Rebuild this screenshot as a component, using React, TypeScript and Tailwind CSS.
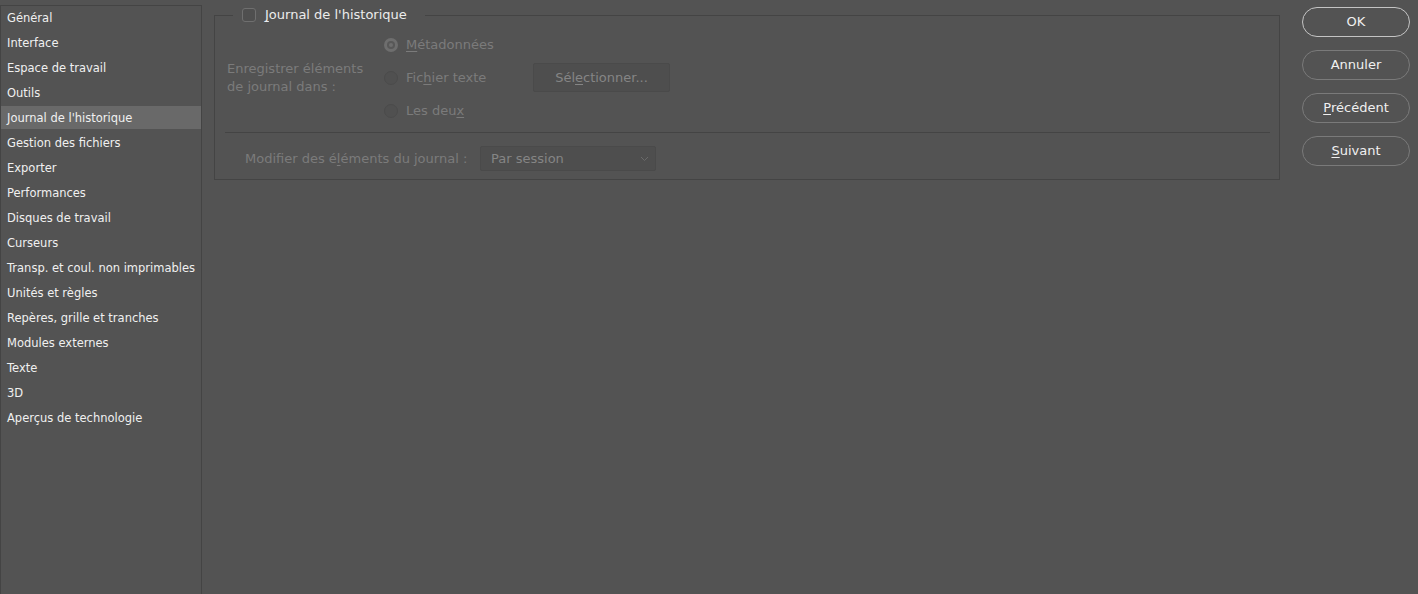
const sections = [
  'Général',
  'Interface',
  'Espace de travail',
  'Outils',
  "Journal de l'historique",
  'Gestion des fichiers',
  'Exporter',
  'Performances',
  'Disques de travail',
  'Curseurs',
  'Transp. et coul. non imprimables',
  'Unités et règles',
  'Repères, grille et tranches',
  'Modules externes',
  'Texte',
  '3D',
  'Aperçus de technologie',
]

function Radio({ checked }: { checked?: boolean }) {
  if (checked) {
    return (
      <span className="flex h-[14px] w-[14px] items-center justify-center rounded-full bg-[#6e6e6e]">
        <span className="flex h-[8px] w-[8px] items-center justify-center rounded-full bg-[#585858]">
          <span className="h-[4px] w-[4px] rounded-full bg-[#6e6e6e]" />
        </span>
      </span>
    )
  }
  return <span className="h-[14px] w-[14px] rounded-full border border-[#4b4b4b] bg-[#505050]" />
}

function PillButton({ children, primary }: { children: React.ReactNode; primary?: boolean }) {
  return (
    <button
      className={`flex h-[30px] w-[108px] items-center justify-center rounded-full text-[13px] text-[#f0f0f0] ${
        primary ? 'border-[1.5px] border-[#c4c4c4]' : 'border border-[#7a7a7a]'
      }`}
    >
      {children}
    </button>
  )
}

export default function App() {
  return (
    <div
      className="flex h-[594px] w-[1418px] overflow-hidden bg-[#535353] text-[#f0f0f0]"
      style={{ fontFamily: '"DejaVu Sans", Verdana, sans-serif' }}
    >
      {/* Category list */}
      <div className="mt-[5px] w-[202px] shrink-0 border-x border-t border-[#444444]">
        {sections.map((s) => (
          <div
            key={s}
            className={`mb-[2px] flex h-[23px] items-center pl-[6px] pt-[2px] text-[11.5px] ${
              s === "Journal de l'historique" ? 'bg-[#696969]' : ''
            }`}
          >
            {s}
          </div>
        ))}
      </div>

      {/* Panel */}
      <div className="ml-[12px] w-[1066px] shrink-0">
        <fieldset className="mt-[5px] h-[175px] border border-[#444444]">
          <legend className="ml-[18px] flex h-[20px] items-center pl-[9px] pr-[18px]">
            <span className="h-[14px] w-[14px] rounded-[3px] border border-[#6f6f6f] bg-[#4f4f4f]" />
            <span className="ml-[9px] text-[13px] text-[#ececec]">
              <span className="underline underline-offset-2">J</span>ournal de l'historique
            </span>
          </legend>

          <div className="flex pt-[3px] text-[13px] text-[#7b7b7b]">
            <div className="flex w-[169px] items-center pl-[12px] leading-[18px]">
              Enregistrer éléments
              <br />
              de journal dans :
            </div>
            <div className="flex flex-col">
              <div className="flex h-[33px] items-center gap-[8px]">
                <Radio checked />
                <span>
                  <span className="underline underline-offset-2">M</span>étadonnées
                </span>
              </div>
              <div className="flex h-[33px] items-center">
                <div className="flex w-[149px] items-center gap-[8px]">
                  <Radio />
                  <span>
                    Fic<span className="underline underline-offset-2">h</span>ier texte
                  </span>
                </div>
                <button className="flex h-[29px] w-[137px] items-center justify-center rounded-[2px] border border-[#4a4a4a] bg-[#4e4e4e] text-[13px] text-[#858585]">
                  Sél<span className="underline underline-offset-2">e</span>ctionner...
                </button>
              </div>
              <div className="flex h-[33px] items-center gap-[8px]">
                <Radio />
                <span>
                  Les deu<span className="underline underline-offset-2">x</span>
                </span>
              </div>
            </div>
          </div>

          <div className="ml-[10px] mr-[9px] mt-[5px] h-px bg-[#444444]" />

          <div className="mt-[13px] flex items-center pl-[30px] text-[13px] text-[#7b7b7b]">
            <span className="w-[235px]">
              Modifier des é<span className="underline underline-offset-2">l</span>éments du journal :
            </span>
            <div className="flex h-[25px] w-[176px] items-center justify-between rounded-[2px] border border-[#4a4a4a] bg-[#4e4e4e] pl-[10px] pr-[6px] text-[#858585]">
              <span>Par session</span>
              <svg width="9" height="6" viewBox="0 0 9 6" fill="none">
                <path d="M1 1l3.5 3.5L8 1" stroke="#6a6a6a" strokeWidth="1" />
              </svg>
            </div>
          </div>
        </fieldset>
      </div>

      {/* Buttons */}
      <div className="ml-[22px] mt-[7px] flex flex-col gap-[13px]">
        <PillButton primary>OK</PillButton>
        <PillButton>Annuler</PillButton>
        <PillButton>
          <span className="underline underline-offset-2">P</span>récédent
        </PillButton>
        <PillButton>
          <span className="underline underline-offset-2">S</span>uivant
        </PillButton>
      </div>
    </div>
  )
}
